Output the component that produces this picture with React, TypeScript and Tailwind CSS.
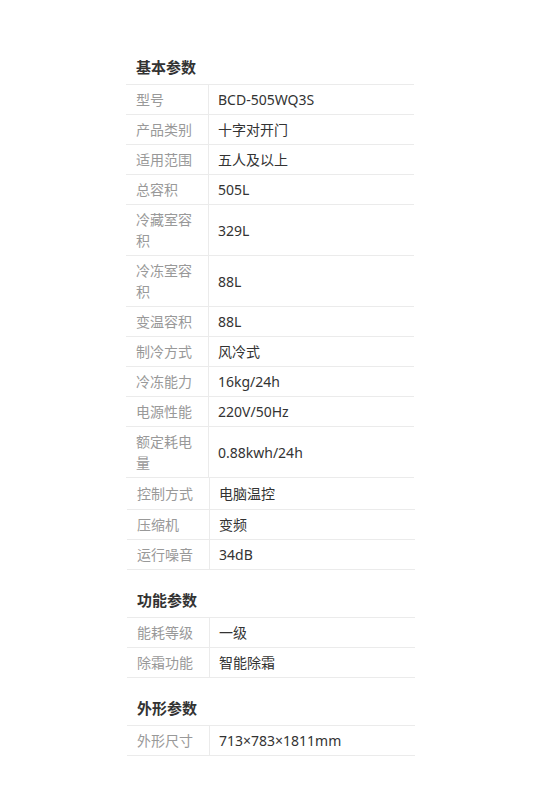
type Row = { label: string; value: string };

const basicTop: Row[] = [
  { label: "型号", value: "BCD-505WQ3S" },
  { label: "产品类别", value: "十字对开门" },
  { label: "适用范围", value: "五人及以上" },
  { label: "总容积", value: "505L" },
  { label: "冷藏室容积", value: "329L" },
  { label: "冷冻室容积", value: "88L" },
  { label: "变温容积", value: "88L" },
  { label: "制冷方式", value: "风冷式" },
  { label: "冷冻能力", value: "16kg/24h" },
  { label: "电源性能", value: "220V/50Hz" },
  { label: "额定耗电量", value: "0.88kwh/24h" },
];

const basicBottom: Row[] = [
  { label: "控制方式", value: "电脑温控" },
  { label: "压缩机", value: "变频" },
  { label: "运行噪音", value: "34dB" },
];

const feature: Row[] = [
  { label: "能耗等级", value: "一级" },
  { label: "除霜功能", value: "智能除霜" },
];

const shape: Row[] = [{ label: "外形尺寸", value: "713×783×1811mm" }];

function Table({ rows, firstTall }: { rows: Row[]; firstTall?: boolean }) {
  return (
    <div className="w-[288px]">
      {rows.map((r, i) => (
        <div key={r.label} className="flex border-b border-[#ebebeb]">
          <div
            className={`w-[83px] shrink-0 border-r border-[#ebebeb] pl-[10px] pr-[10px] text-[#999999] ${
              firstTall && i === 0 ? "py-[5px]" : "py-[4px]"
            }`}
          >
            {r.label}
          </div>
          <div className="flex flex-1 items-center pl-[9px] text-[#333333]">{r.value}</div>
        </div>
      ))}
    </div>
  );
}

function Heading({ children }: { children: string }) {
  return (
    <h3 className="mb-[7px] pl-[10px] text-[15px] font-bold leading-[20px] text-[#333333]">
      {children}
    </h3>
  );
}

export default function App() {
  return (
    <div
      className="min-h-[803px] bg-white pt-[57px] text-[14px] leading-[21px]"
      style={{ fontFamily: '"Noto Sans", "Noto Sans CJK SC", sans-serif' }}
    >
      <div className="ml-[126px] w-[288px]">
        <Heading>基本参数</Heading>
        <div className="border-t border-[#ebebeb]">
          <Table rows={basicTop} />
        </div>
      </div>
      <div className="ml-[127px] w-[288px]">
        <Table rows={basicBottom} firstTall />

        <div className="mt-[20px]">
          <Heading>功能参数</Heading>
          <div className="border-t border-[#ebebeb]">
            <Table rows={feature} />
          </div>
        </div>

        <div className="mt-[20px]">
          <Heading>外形参数</Heading>
          <div className="border-t border-[#ebebeb]">
            <Table rows={shape} />
          </div>
        </div>
      </div>
    </div>
  );
}
